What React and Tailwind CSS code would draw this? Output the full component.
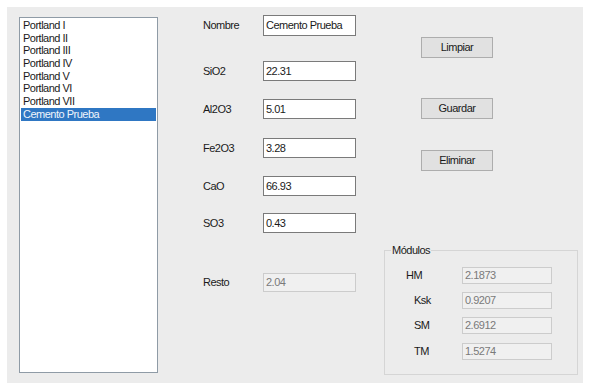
import React from 'react'

const items = ['Portland I', 'Portland II', 'Portland III', 'Portland IV', 'Portland V', 'Portland VI', 'Portland VII', 'Cemento Prueba']

const fields = [
  { label: 'SiO2', value: '22.31', mt: 'mt-[25px]' },
  { label: 'Al2O3', value: '5.01', mt: 'mt-[18px]' },
  { label: 'Fe2O3', value: '3.28', mt: 'mt-[19px]' },
  { label: 'CaO', value: '66.93', mt: 'mt-[18px]' },
  { label: 'SO3', value: '0.43', mt: 'mt-[17px]' },
]

const modulos = [
  { label: 'HM', value: '2.1873', ml: 'ml-[21px]', mt: 'mt-[16px]' },
  { label: 'Ksk', value: '0.9207', ml: 'ml-[29px]', mt: 'mt-[8px]' },
  { label: 'SM', value: '2.6912', ml: 'ml-[29px]', mt: 'mt-[8px]' },
  { label: 'TM', value: '1.5274', ml: 'ml-[29px]', mt: 'mt-[9px]' },
]

function Button({ children, mt }) {
  return (
    <div className={`${mt} w-[72px] h-[21px] flex items-center justify-center bg-[#e1e1e1] border border-[#adadad] text-[#1a1a1a]`}>
      {children}
    </div>
  )
}

export default function App() {
  return (
    <div
      className="w-[592px] h-[390px] bg-white p-[7px] text-[11px] tracking-[-0.5px] text-[#1a1a1a]"
      style={{ fontFamily: '"Liberation Sans", Arial, sans-serif' }}
    >
      <div className="w-[576px] h-[376px] bg-[#ececec] flex items-start">
        {/* List box */}
        <div className="ml-[12px] mt-[10px] w-[139px] h-[356px] bg-white border border-[#8f9ba6] pt-[1px] px-[1px]">
          {items.map((it, i) => (
            <div
              key={it}
              className={`h-[12.7px] leading-[12.7px] pl-[2px] ${i === items.length - 1 ? 'bg-[#2f77c3] text-[#eef4fb]' : ''}`}
            >
              {it}
            </div>
          ))}
        </div>

        {/* Form fields */}
        <div className="ml-[45px] mt-[8px] flex flex-col">
          <div className="flex items-center">
            <div className="w-[60px]">Nombre</div>
            <div className="w-[93px] h-[21px] bg-white border border-[#7a7a7a] pl-[2px] flex items-center">Cemento Prueba</div>
          </div>
          {fields.map((f) => (
            <div key={f.label} className={`${f.mt} flex items-center`}>
              <div className="w-[60px]">{f.label}</div>
              <div className="w-[93px] h-[20px] bg-white border border-[#7a7a7a] pl-[2px] flex items-center">{f.value}</div>
            </div>
          ))}
          <div className="mt-[40px] flex items-center">
            <div className="w-[60px]">Resto</div>
            <div className="w-[93px] h-[19px] bg-[#f0f0f0] border border-[#cccccc] pl-[2px] flex items-center text-[#7a7a7a]">2.04</div>
          </div>
        </div>

        {/* Buttons + group */}
        <div className="ml-[28px] flex flex-col">
          <div className="ml-[37px] flex flex-col">
            <Button mt="mt-[30px]">Limpiar</Button>
            <Button mt="mt-[40px]">Guardar</Button>
            <Button mt="mt-[31px]">Eliminar</Button>
          </div>
          <div className="relative mt-[79px] w-[194px] h-[125px] border border-[#d5d5d5]">
            <span className="absolute left-[6px] -top-[8px] px-[1px] bg-[#ececec] leading-[14px]">Módulos</span>
            {modulos.map((m) => (
              <div key={m.label} className={`${m.mt} flex items-center`}>
                <div className={`${m.ml} flex-1`}>{m.label}</div>
                <div className="mr-[25px] w-[90px] h-[17px] bg-[#f0f0f0] border border-[#cccccc] pl-[2px] flex items-center text-[#7a7a7a]">{m.value}</div>
              </div>
            ))}
          </div>
        </div>
      </div>
    </div>
  )
}
